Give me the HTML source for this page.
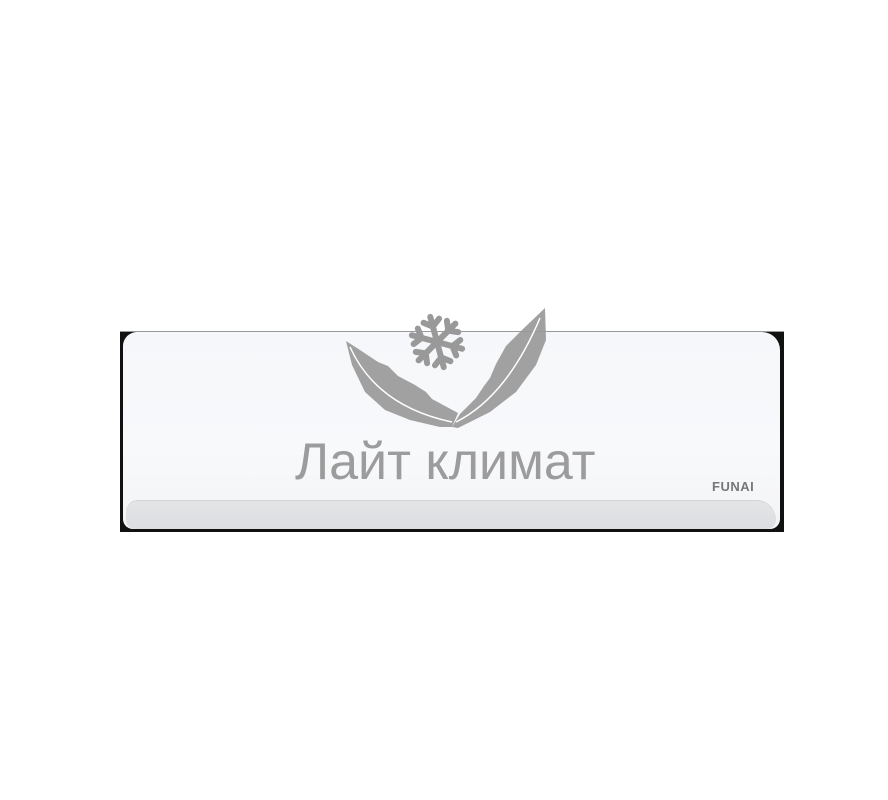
<!DOCTYPE html>
<html><head><meta charset="utf-8"><style>
html,body{margin:0;padding:0;background:#fff;width:888px;height:800px;overflow:hidden;position:relative;font-family:"Liberation Sans",sans-serif}
.unit{position:absolute;left:120px;top:331px;width:664px;height:201px;background:#111}
.face{position:absolute;left:3px;top:1px;right:4px;bottom:3px;background:linear-gradient(#f5f7fa,#f8f9fb 60%,#f3f4f6);border-radius:14px 18px 10px 10px}
.band{position:absolute;left:6px;right:8px;bottom:3px;height:28px;background:linear-gradient(#e4e5e7,#dcdde0);border-radius:18px 30px 14px 14px;border-top:1px solid #d3d4d7}
.top{position:absolute;left:120px;top:331px;width:664px;height:1px;background:#999}
.funai{position:absolute;left:712px;top:479px;font-size:13px;font-weight:bold;color:#777;letter-spacing:0.5px}
.txt{position:absolute;left:295px;top:432px;font-size:52px;color:rgba(140,140,140,0.85)}
svg{position:absolute;left:0;top:0}
</style></head><body>
<div class="unit"><div class="face"></div><div class="band"></div></div>
<div class="top"></div>
<div class="funai">FUNAI</div>
<svg width="888" height="800">
<g fill="#999" fill-opacity="0.92">
<path d="M346 341 L360 350 L378 362 L388 366 L398 376 L415 385 L426 392 L432 399 L458 413 L452 427 L440 427 L410 420 L385 410 L365 392 L352 365 Z"/>
<path d="M545 308 L546 340 L536 365 L516 392 L490 412 L458 428 L452 427 L460 414 L476 398 L484 386 L490 378 L496 364 L506 346 L522 330 Z"/>
</g>
<path d="M350 347 C365 380 395 410 452 422" stroke="#fff" stroke-width="1.5" fill="none"/>
<path d="M456 422 C490 405 518 370 540 318" stroke="#fff" stroke-width="1.5" fill="none"/>
<g stroke="#999" stroke-width="6" stroke-linecap="round" fill="none" transform="translate(437,342) rotate(-15)">
<g><line x1="0" y1="0" x2="0" y2="-26"/><line x1="0" y1="-16" x2="-8" y2="-22"/><line x1="0" y1="-16" x2="8" y2="-22"/></g>
<g transform="rotate(60)"><line x1="0" y1="0" x2="0" y2="-26"/><line x1="0" y1="-16" x2="-8" y2="-22"/><line x1="0" y1="-16" x2="8" y2="-22"/></g>
<g transform="rotate(120)"><line x1="0" y1="0" x2="0" y2="-26"/><line x1="0" y1="-16" x2="-8" y2="-22"/><line x1="0" y1="-16" x2="8" y2="-22"/></g>
<g transform="rotate(180)"><line x1="0" y1="0" x2="0" y2="-26"/><line x1="0" y1="-16" x2="-8" y2="-22"/><line x1="0" y1="-16" x2="8" y2="-22"/></g>
<g transform="rotate(240)"><line x1="0" y1="0" x2="0" y2="-26"/><line x1="0" y1="-16" x2="-8" y2="-22"/><line x1="0" y1="-16" x2="8" y2="-22"/></g>
<g transform="rotate(300)"><line x1="0" y1="0" x2="0" y2="-26"/><line x1="0" y1="-16" x2="-8" y2="-22"/><line x1="0" y1="-16" x2="8" y2="-22"/></g>
</g>
</svg>
<div class="txt">Лайт климат</div>
</body></html>
